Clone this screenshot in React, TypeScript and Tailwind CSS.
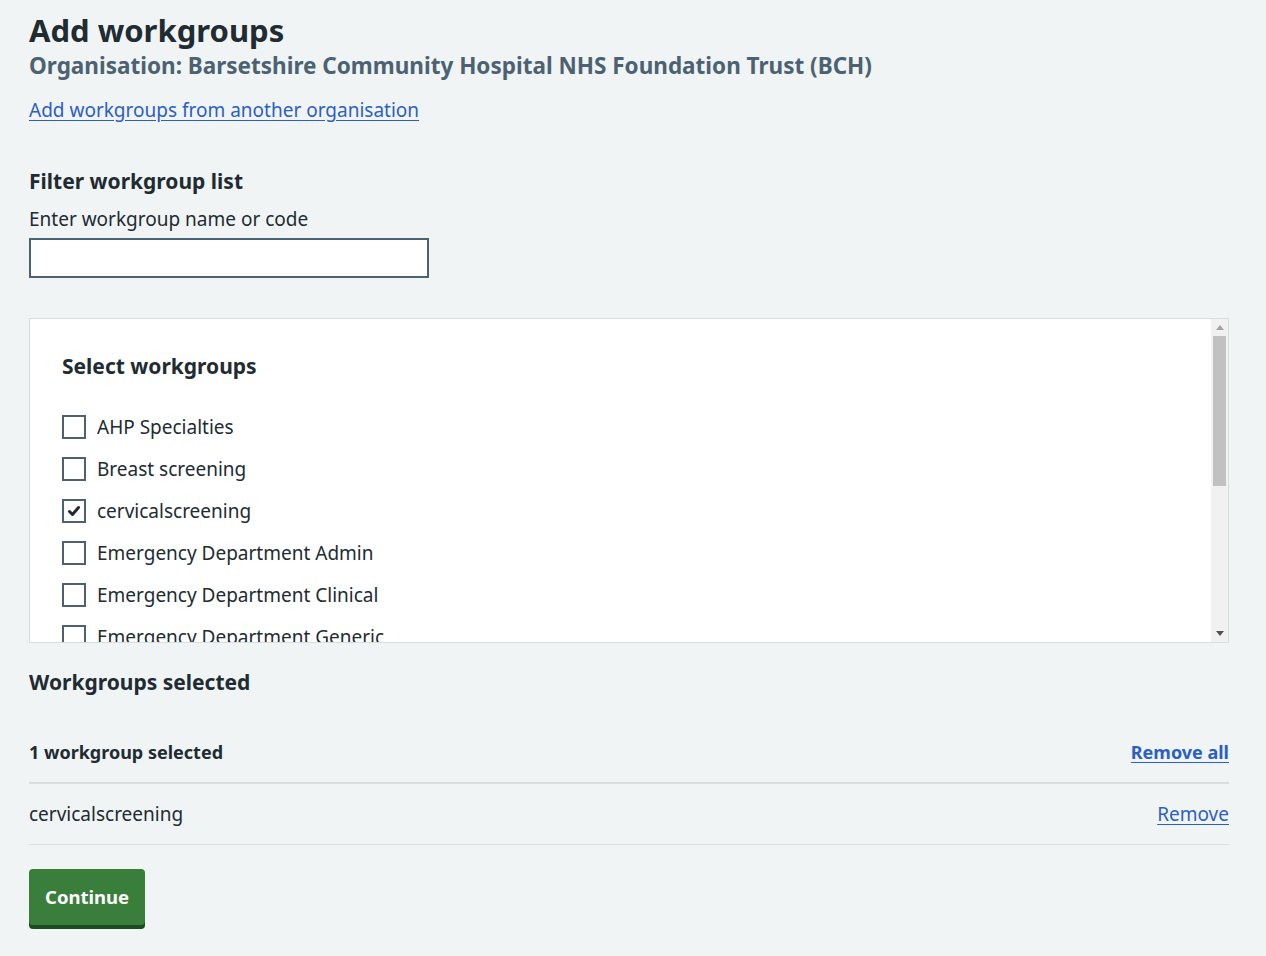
import React from "react";

const font = { fontFamily: '"Noto Sans", "Open Sans", Arial, sans-serif' };

const workgroups: { name: string; checked?: boolean }[] = [
  { name: "AHP Specialties" },
  { name: "Breast screening" },
  { name: "cervicalscreening", checked: true },
  { name: "Emergency Department Admin" },
  { name: "Emergency Department Clinical" },
  { name: "Emergency Department Generic" },
];

function Checkbox({ checked }: { checked?: boolean }) {
  return (
    <span className="flex h-6 w-6 shrink-0 items-center justify-center border-2 border-[#4c6272] bg-white">
      {checked && (
        <svg width="14" height="12" viewBox="0 0 14 12">
          <path d="M2.5 6.5 L5.5 9.5 L11.5 2.5" fill="none" stroke="#212b32" strokeWidth="3" strokeLinecap="round" strokeLinejoin="round" />
        </svg>
      )}
    </span>
  );
}

// Classic scrollbar drawn beside the list
function Scrollbar() {
  return (
    <div className="flex w-[17px] shrink-0 flex-col bg-[#f1f1f1]">
      <div className="flex h-[17px] items-center justify-center">
        <svg width="8" height="5" viewBox="0 0 8 5">
          <path d="M0 5 L4 0 L8 5 Z" fill="#a3a3a3" />
        </svg>
      </div>
      <div className="flex-1 px-[2px]">
        <div className="h-[150px] bg-[#c1c1c1]" />
      </div>
      <div className="flex h-[17px] items-center justify-center">
        <svg width="8" height="5" viewBox="0 0 8 5">
          <path d="M0 0 L8 0 L4 5 Z" fill="#505050" />
        </svg>
      </div>
    </div>
  );
}

export default function App() {
  return (
    <div className="min-h-screen bg-[#f0f4f5] text-[#212b32]" style={font}>
      <div className="w-[1229px] pl-[29px] pt-[10px]">
        <h1 className="text-[31px] font-bold leading-[40px]">Add workgroups</h1>
        <p className="mt-[1px] text-[22.5px] font-bold leading-[30px] text-[#4c6272]">
          Organisation: Barsetshire Community Hospital NHS Foundation Trust (BCH)
        </p>
        <a href="#" className="mt-[15px] inline-block text-[19px] leading-[28px] text-[#2c5fc4] underline underline-offset-[3px]">
          Add workgroups from another organisation
        </a>

        <h2 className="mt-[42px] text-[21px] font-bold leading-[30px]">Filter workgroup list</h2>
        <label className="mt-[9px] block text-[19px] leading-[28px]">Enter workgroup name or code</label>
        <input type="text" className="mt-[5px] block h-10 w-[400px] border-2 border-[#4c6272] bg-white px-2 outline-none" />

        <div className="mt-10 flex h-[325px] w-full overflow-hidden border border-[#d8dde0] bg-white">
          <div className="min-w-0 flex-1 overflow-hidden px-8 pt-[31px]">
            <h3 className="text-[21px] font-bold leading-[32px]">Select workgroups</h3>
            <ul className="mt-[33px] flex flex-col gap-[18px]">
              {workgroups.map((w) => (
                <li key={w.name} className="flex h-6 items-center gap-[11px]">
                  <Checkbox checked={w.checked} />
                  <span className="text-[19px] leading-6">{w.name}</span>
                </li>
              ))}
            </ul>
          </div>
          <Scrollbar />
        </div>

        <h2 className="mt-[23px] text-[21px] font-bold leading-[32px]">Workgroups selected</h2>
        <div className="mt-[40px] flex items-center justify-between border-b-2 border-[#d8dde0] pb-[16px]">
          <span className="text-[18px] font-bold leading-[28px]">1 workgroup selected</span>
          <a href="#" className="text-[18px] font-bold leading-[28px] text-[#2c5fc4] underline underline-offset-[3px]">Remove all</a>
        </div>
        <div className="flex items-center justify-between border-b border-[#d8dde0] py-[16px]">
          <span className="text-[19px] leading-[28px]">cervicalscreening</span>
          <a href="#" className="text-[19px] leading-[28px] text-[#2c5fc4] underline underline-offset-[3px]">Remove</a>
        </div>

        <button className="mt-[24px] h-14 rounded-[4px] bg-[#3a7e3c] px-[16px] text-[18.5px] font-bold text-white shadow-[0_4px_0_#1d4a20]">
          Continue
        </button>
      </div>
    </div>
  );
}
